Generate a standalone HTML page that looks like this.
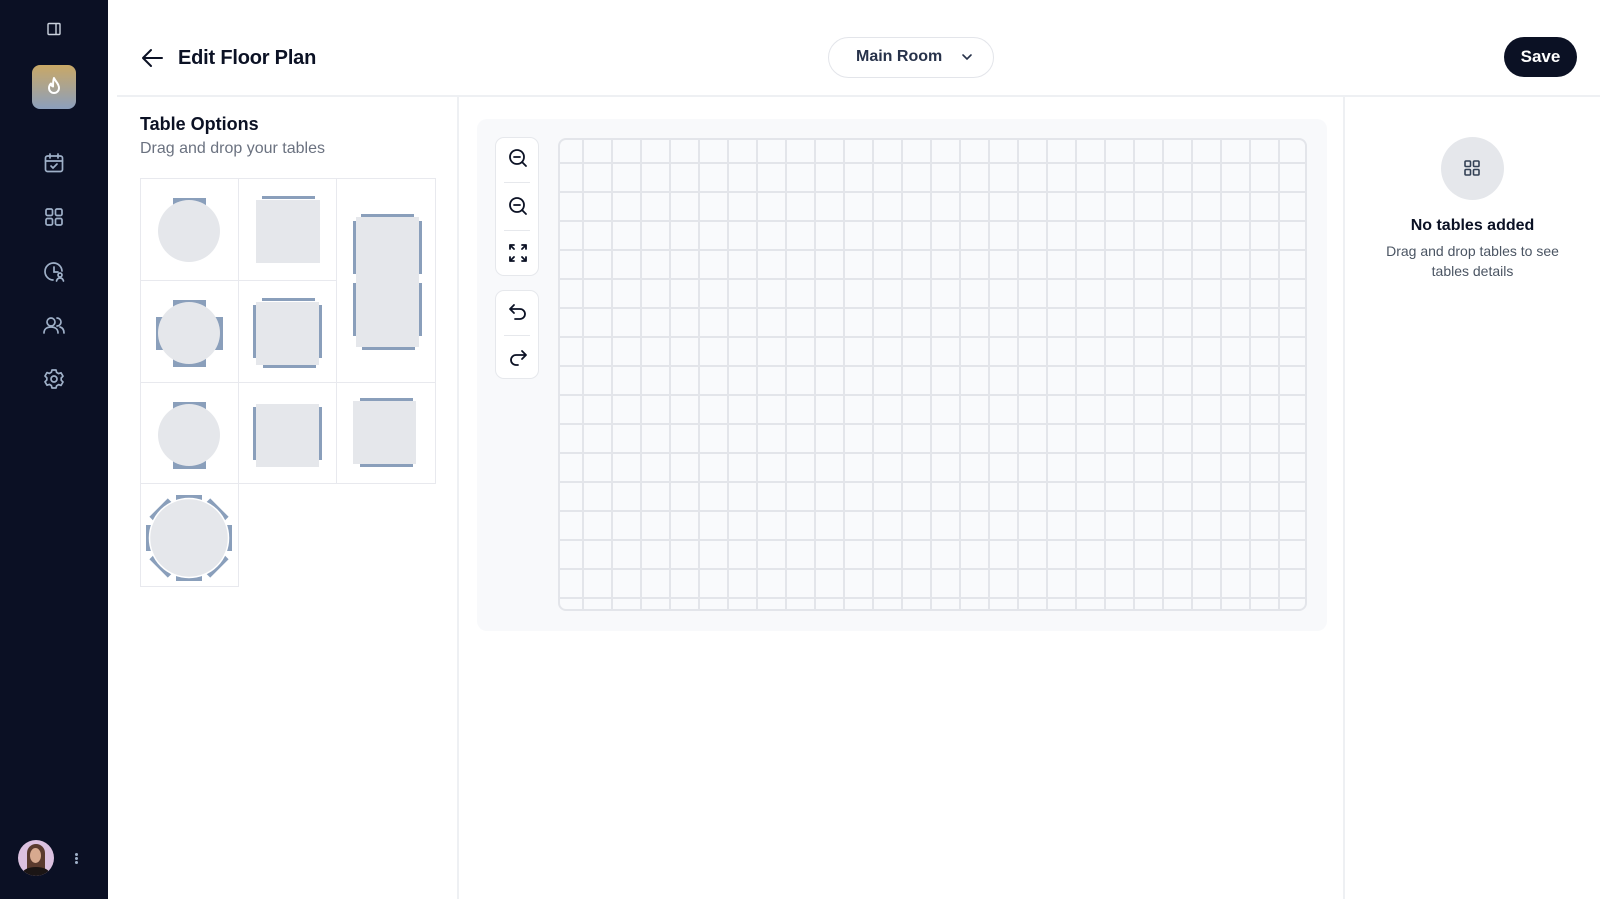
<!DOCTYPE html>
<html><head><meta charset="utf-8"><style>
*{margin:0;padding:0;box-sizing:border-box}
body{width:1600px;height:899px;overflow:hidden;background:#fff;font-family:"Liberation Sans",sans-serif;position:relative;color:#0b1124}
.abs{position:absolute}
.side{left:0;top:0;width:108px;height:899px;background:#0b1024}
.ic{position:absolute;left:42px;width:24px;height:24px}
.tile{position:absolute;border:1.5px solid #e8e9ee;background:#fff}
.grid{left:558px;top:138px;width:749px;height:473px;border:2px solid #e3e5ea;border-radius:8px;background-color:#f9fafc;
background-image:linear-gradient(to right,#e3e5ea 2px,transparent 2px),linear-gradient(to bottom,#e3e5ea 2px,transparent 2px);
background-size:29px 29px;background-position:22px 22px}
.tb{position:absolute;left:495px;width:44px;background:#fff;border:1px solid #e6e8ec;border-radius:9px}
.tb .sep{position:absolute;left:8px;right:8px;height:1px;background:#e6e8ec}
</style></head><body>
<div class="abs side">
 <svg class="ic" style="top:22px;left:47px;width:14px;height:14px" viewBox="0 0 14 14"><rect x="1" y="1.5" width="12" height="11" rx="1" fill="none" stroke="#cbd2de" stroke-width="1.4"/><line x1="9" y1="1.5" x2="9" y2="12.5" stroke="#cbd2de" stroke-width="1.4"/></svg>
 <div class="abs" style="left:32px;top:65px;width:44px;height:44px;border-radius:8px;background:linear-gradient(#c9a866,#8c9fbd)"></div>
 <svg class="abs" style="left:42px;top:75px" width="24" height="24" viewBox="0 0 24 24"><path d="M12 3c1 3 5 5.5 5 10a5 5 0 0 1-10 0c0-2 1-3.5 2-4.5 0 1.5.8 2.5 2 3 0-3 0-6 1-8.5z" fill="none" stroke="#fff" stroke-width="2" stroke-linejoin="round"/></svg>
 <svg class="ic" style="top:151px" viewBox="0 0 24 24" fill="none" stroke="#9fb0c8" stroke-width="1.7" stroke-linecap="round"><rect x="3.5" y="5" width="17" height="15.5" rx="2"/><path d="M8 3v4M16 3v4M3.5 10h17M9 15l2 2 4-4"/></svg>
 <svg class="ic" style="top:205px" viewBox="0 0 24 24" fill="none" stroke="#9fb0c8" stroke-width="1.7"><rect x="4" y="4" width="6.5" height="6.5" rx="1.5"/><rect x="13.5" y="4" width="6.5" height="6.5" rx="1.5"/><rect x="4" y="13.5" width="6.5" height="6.5" rx="1.5"/><rect x="13.5" y="13.5" width="6.5" height="6.5" rx="1.5"/></svg>
 <svg class="ic" style="top:260px" viewBox="0 0 24 24" fill="none" stroke="#9fb0c8" stroke-width="1.7" stroke-linecap="round"><path d="M20 11a8.5 8.5 0 1 0-9 9M12 7v5h4"/><circle cx="18" cy="15" r="2"/><path d="M14.5 21c.5-2 2-3 3.5-3s3 1 3.5 3"/></svg>
 <svg class="ic" style="top:313px" viewBox="0 0 24 24" fill="none" stroke="#9fb0c8" stroke-width="1.7" stroke-linecap="round"><circle cx="9" cy="9" r="4"/><path d="M2 20c0-4 3-6 7-6s7 2 7 6M15 5a4 4 0 0 1 0 8M18 14c2.5.7 4 2.7 4 6"/></svg>
 <svg class="ic" style="top:367px" viewBox="0 0 24 24" fill="none" stroke="#9fb0c8" stroke-width="1.7" stroke-linejoin="round"><circle cx="12" cy="12" r="3"/><path d="M10 3h4l.6 2.4 2 1.2 2.4-.8 2 3.4-1.8 1.8v2.2l1.8 1.8-2 3.4-2.4-.8-2 1.2L14 21h-4l-.6-2.4-2-1.2-2.4.8-2-3.4 1.8-1.8v-2.2L3 9l2-3.4 2.4.8 2-1.2z"/></svg>
 <div class="abs" style="left:18px;top:840px;width:36px;height:36px;border-radius:50%;background:#dcc1e0;overflow:hidden">
  <div class="abs" style="left:9px;top:4px;width:18px;height:30px;border-radius:9px 9px 4px 4px;background:#5a3a2e"></div>
  <div class="abs" style="left:12px;top:8px;width:11px;height:15px;border-radius:50%;background:#d7a98f"></div>
  <div class="abs" style="left:4px;top:27px;width:28px;height:14px;border-radius:50% 50% 0 0;background:#1b1515"></div>
 </div>
 <div class="abs" style="left:75px;top:853px;width:3px;height:3px;border-radius:50%;background:#9fb0c8;box-shadow:0 4px 0 #9fb0c8,0 8px 0 #9fb0c8"></div>
</div>

<svg class="abs" style="left:141px;top:47px" width="24" height="22" viewBox="0 0 24 22" fill="none" stroke="#0b1124" stroke-width="2" stroke-linecap="round" stroke-linejoin="round"><path d="M21 11H3M10 3l-8 8 8 8"/></svg>
<div class="abs" style="left:178px;top:47px;font-size:20px;font-weight:700;letter-spacing:-0.2px">Edit Floor Plan</div>
<div class="abs" style="left:828px;top:37px;width:166px;height:41px;border:1px solid #e3e5ea;border-radius:21px"></div>
<div class="abs" style="left:856px;top:48px;font-size:16px;color:#27324a;font-weight:600">Main Room</div>
<svg class="abs" style="left:961px;top:52px" width="12" height="10" viewBox="0 0 12 10" fill="none" stroke="#27324a" stroke-width="1.6" stroke-linecap="round"><path d="M2 3l4 4 4-4"/></svg>
<div class="abs" style="left:1504px;top:37px;width:73px;height:40px;border-radius:20px;background:#0b1124;color:#fff;font-size:17px;font-weight:600;text-align:center;line-height:40px">Save</div>

<div class="abs" style="left:117px;top:95px;width:1483px;height:2px;background:#eef0f3"></div>
<div class="abs" style="left:457px;top:96px;width:2px;height:803px;background:#eef0f3"></div>
<div class="abs" style="left:1343px;top:96px;width:2px;height:803px;background:#eef0f3"></div>

<div class="abs" style="left:140px;top:114px;font-size:18px;font-weight:700">Table Options</div>
<div class="abs" style="left:140px;top:140px;font-size:16px;color:#6b7280">Drag and drop your tables</div>

<div class="tile" style="left:140px;top:178px;width:99px;height:103px"><svg width="98" height="101"><rect x="32" y="19" width="33" height="8" fill="#8a9fbb"/><circle cx="48" cy="52" r="31" fill="#e5e7eb"/></svg></div>
<div class="tile" style="left:238px;top:178px;width:99px;height:103px"><svg width="98" height="101"><rect x="23" y="17" width="53" height="3" fill="#8a9fbb"/><rect x="17" y="21" width="64" height="63" fill="#e5e7eb"/></svg></div>
<div class="tile" style="left:336px;top:178px;width:100px;height:205px"><svg width="98" height="204"><rect x="24" y="35" width="53" height="3" fill="#8a9fbb"/><rect x="25" y="168" width="53" height="3" fill="#8a9fbb"/><rect x="16" y="42" width="3" height="53" fill="#8a9fbb"/><rect x="16" y="104" width="3" height="53" fill="#8a9fbb"/><rect x="82" y="42" width="3" height="53" fill="#8a9fbb"/><rect x="82" y="104" width="3" height="53" fill="#8a9fbb"/><rect x="19" y="38" width="63" height="130" fill="#e5e7eb"/></svg></div>
<div class="tile" style="left:140px;top:280px;width:99px;height:103px"><svg width="98" height="101"><rect x="32" y="19" width="33" height="8" fill="#8a9fbb"/><rect x="32" y="78" width="33" height="8" fill="#8a9fbb"/><rect x="15" y="36" width="8" height="33" fill="#8a9fbb"/><rect x="74" y="36" width="8" height="33" fill="#8a9fbb"/><circle cx="48" cy="52" r="31" fill="#e5e7eb"/></svg></div>
<div class="tile" style="left:238px;top:280px;width:99px;height:103px"><svg width="98" height="101"><rect x="23" y="17" width="53" height="3" fill="#8a9fbb"/><rect x="24" y="84" width="53" height="3" fill="#8a9fbb"/><rect x="14" y="24" width="3" height="53" fill="#8a9fbb"/><rect x="80" y="24" width="3" height="53" fill="#8a9fbb"/><rect x="17" y="21" width="63" height="63" fill="#e5e7eb"/></svg></div>
<div class="tile" style="left:140px;top:382px;width:99px;height:102px"><svg width="98" height="101"><rect x="32" y="19" width="33" height="8" fill="#8a9fbb"/><rect x="32" y="78" width="33" height="8" fill="#8a9fbb"/><circle cx="48" cy="52" r="31" fill="#e5e7eb"/></svg></div>
<div class="tile" style="left:238px;top:382px;width:99px;height:102px"><svg width="98" height="101"><rect x="14" y="24" width="3" height="53" fill="#8a9fbb"/><rect x="80" y="24" width="3" height="53" fill="#8a9fbb"/><rect x="17" y="21" width="63" height="63" fill="#e5e7eb"/></svg></div>
<div class="tile" style="left:336px;top:382px;width:100px;height:102px"><svg width="98" height="101"><rect x="23" y="15" width="53" height="3" fill="#8a9fbb"/><rect x="23" y="81" width="53" height="3" fill="#8a9fbb"/><rect x="16" y="18" width="63" height="63" fill="#e5e7eb"/></svg></div>
<div class="tile" style="left:140px;top:483px;width:99px;height:104px"><svg width="98" height="102"><g fill="#8a9fbb" transform="translate(48,54)">
<rect x="-13" y="-43" width="26" height="6"/><rect x="-13" y="-43" width="26" height="6" transform="rotate(45)"/><rect x="-13" y="-43" width="26" height="6" transform="rotate(90)"/><rect x="-13" y="-43" width="26" height="6" transform="rotate(135)"/><rect x="-13" y="-43" width="26" height="6" transform="rotate(180)"/><rect x="-13" y="-43" width="26" height="6" transform="rotate(225)"/><rect x="-13" y="-43" width="26" height="6" transform="rotate(270)"/><rect x="-13" y="-43" width="26" height="6" transform="rotate(315)"/></g><circle cx="48" cy="54" r="39.5" fill="#e5e7eb" stroke="#fff" stroke-width="1.5"/></svg></div>

<div class="abs" style="left:477px;top:119px;width:850px;height:512px;background:#f8f9fb;border-radius:10px"></div>
<div class="abs grid"></div>
<div class="tb" style="top:137px;height:139px">
 <svg class="abs" style="left:11px;top:9px" width="22" height="22" viewBox="0 0 22 22" fill="none" stroke="#0b1124" stroke-width="1.8" stroke-linecap="round"><circle cx="10" cy="10" r="7"/><path d="M7 10h6M15 15l4 4"/></svg>
 <div class="sep" style="top:44px"></div>
 <svg class="abs" style="left:11px;top:57px" width="22" height="22" viewBox="0 0 22 22" fill="none" stroke="#0b1124" stroke-width="1.8" stroke-linecap="round"><circle cx="10" cy="10" r="7"/><path d="M7 10h6M15 15l4 4"/></svg>
 <div class="sep" style="top:92px"></div>
 <svg class="abs" style="left:11px;top:104px" width="22" height="22" viewBox="0 0 22 22" fill="none" stroke="#0b1124" stroke-width="1.8" stroke-linecap="round" stroke-linejoin="round"><path d="M3 7V3h4M3 3l4 4M15 3h4v4M19 3l-4 4M3 15v4h4M3 19l4-4M19 15v4h-4M19 19l-4-4"/></svg>
</div>
<div class="tb" style="top:290px;height:89px">
 <svg class="abs" style="left:11px;top:10px" width="22" height="22" viewBox="0 0 22 22" fill="none" stroke="#0b1124" stroke-width="1.8" stroke-linecap="round" stroke-linejoin="round"><path d="M7 4L3 8l4 4M3 8h10a5 5 0 0 1 0 10H8"/></svg>
 <div class="sep" style="top:44px"></div>
 <svg class="abs" style="left:11px;top:56px" width="22" height="22" viewBox="0 0 22 22" fill="none" stroke="#0b1124" stroke-width="1.8" stroke-linecap="round" stroke-linejoin="round"><path d="M15 4l4 4-4 4M19 8H9a5 5 0 0 0 0 10h2"/></svg>
</div>

<div class="abs" style="left:1441px;top:137px;width:63px;height:63px;border-radius:50%;background:#e5e7eb"></div>
<svg class="abs" style="left:1463px;top:159px" width="18" height="18" viewBox="0 0 18 18" fill="none" stroke="#334155" stroke-width="1.6"><rect x="2" y="2" width="5.5" height="5.5" rx="1"/><rect x="10.5" y="2" width="5.5" height="5.5" rx="1"/><rect x="2" y="10.5" width="5.5" height="5.5" rx="1"/><rect x="10.5" y="10.5" width="5.5" height="5.5" rx="1"/></svg>
<div class="abs" style="left:1345px;width:255px;top:217px;text-align:center;font-size:16px;font-weight:600">No tables added</div>
<div class="abs" style="left:1345px;width:255px;top:241px;text-align:center;font-size:14px;color:#4b5563;line-height:20px">Drag and drop tables to see<br>tables details</div>
</body></html>
